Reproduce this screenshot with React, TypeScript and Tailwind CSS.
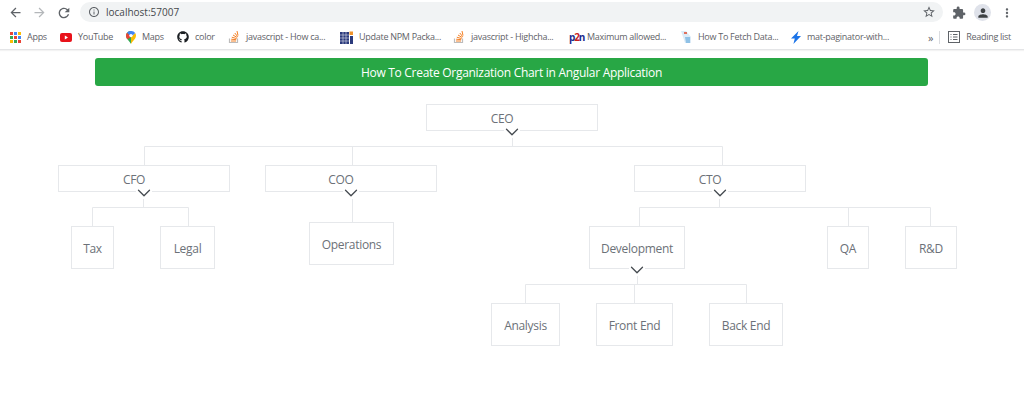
import { ChevronDown } from "lucide-react";
import { FaGithub } from "react-icons/fa";
import {
  MdArrowBack,
  MdArrowForward,
  MdExtension,
  MdInfoOutline,
  MdMoreVert,
  MdPerson,
  MdRefresh,
  MdStarBorder,
} from "react-icons/md";

function AppsIcon() {
  const colors = ["#ea4335", "#4285f4", "#fbbc04", "#34a853", "#ea4335", "#4285f4", "#fbbc04", "#34a853", "#ea4335"];
  return (
    <span className="grid grid-cols-3 gap-[1px] w-[11px] h-[11px] shrink-0">
      {colors.map((c, i) => (
        <svg key={i} viewBox="0 0 3 3" className="w-[3px] h-[3px]">
          <rect width="3" height="3" fill={c} />
        </svg>
      ))}
    </span>
  );
}

function YouTubeIcon() {
  return (
    <svg viewBox="0 0 12 9" className="w-3 h-[9px] shrink-0">
      <rect width="12" height="9" rx="2" fill="#e8121a" />
      <path d="M4.8 2.6 8 4.5 4.8 6.4z" fill="#fff" />
    </svg>
  );
}

function MapsIcon() {
  return (
    <svg viewBox="0 0 10 13" className="w-[10px] h-[13px] shrink-0">
      <path d="M5 13C3.8 10.5 0 8 0 4.6A4.8 4.8 0 0 1 5 0z" fill="#34a853" />
      <path d="M5 13c1.2-2.5 5-5 5-8.4a4.8 4.8 0 0 0-.8-2.6L5 6z" fill="#fbbc04" />
      <path d="M1 1.7A5 5 0 0 1 5 0a5 5 0 0 1 4.2 2L5 6z" fill="#4285f4" />
      <path d="M0 4.6c0-1.2.4-2.2 1-2.9L5 6 1.2 8.2C.5 7.2 0 6 0 4.6z" fill="#ea4335" />
      <circle cx="5" cy="4.6" r="1.7" fill="#fff" />
    </svg>
  );
}

function StackIcon() {
  return (
    <svg viewBox="0 0 12 14" className="w-3 h-[14px] shrink-0" fill="none">
      <path d="M1.5 8.500v4h8v-4" stroke="#bcbbbb" strokeWidth="1.2" />
      <path d="M3 11h5M3.200 9.200l5 .5M3.800 7.200l4.800 1.400M5 5l4.200 2.500M6.800 3l3 3.800M9 1l1 4.500" stroke="#f48024" strokeWidth="1" />
    </svg>
  );
}

function GridIcon() {
  return (
    <svg viewBox="0 0 13 13" className="w-[13px] h-[13px] shrink-0">
      <path d="M0 1h9v12H0z" fill="#2b3a7c" />
      <path d="M3 1v12M6 1v12M0 4h9M0 7h9M0 10h9" stroke="#fff" strokeWidth=".5" />
      <path d="M10 5h3v8h-3z" fill="#2b3a7c" />
      <rect x="9.500" y="0.500" width="3.500" height="3.500" fill="#f0932b" />
    </svg>
  );
}

function FetchIcon() {
  return (
    <svg viewBox="0 0 12 14" className="w-3 h-[14px] shrink-0">
      <path d="M1 1h5l5 6v6H5z" fill="#dcebf7" />
      <path d="M5 7h5v6H6z" fill="#8fc1e6" />
      <rect x="4" y="2" width="3" height="2" fill="#e0705c" />
    </svg>
  );
}

function BoltIcon() {
  return (
    <svg viewBox="0 0 10 13" className="w-[10px] h-[13px] shrink-0">
      <path d="M7.500 0 0 7.600h3.800L2.400 13 10 5H6z" fill="#1a73e8" />
    </svg>
  );
}

function ReadingIcon() {
  return (
    <svg viewBox="0 0 12 12" className="w-3 h-3 shrink-0" fill="none" stroke="#5f6368">
      <rect x=".5" y=".5" width="11" height="11" />
      <path d="M2.500 3.500h1M5 3.500h4.500M2.500 6h1M5 6h4.500M2.500 8.500h1M5 8.500h4.500" />
    </svg>
  );
}

const bookmarks = [
  { icon: <AppsIcon />, label: "Apps", box: "w-[50px]" },
  { icon: <YouTubeIcon />, label: "YouTube", box: "w-[66px]" },
  { icon: <MapsIcon />, label: "Maps", box: "w-[51px]" },
  { icon: <FaGithub className="w-3 h-3 shrink-0 text-[#1b1f23]" />, label: "color", box: "w-[51px]" },
  { icon: <StackIcon />, label: "javascript - How ca...", box: "w-[112px]" },
  { icon: <GridIcon />, label: "Update NPM Packa...", box: "w-[113px]" },
  { icon: <StackIcon />, label: "javascript - Highcha...", box: "w-[116px]" },
  {
    icon: (
      <span className="w-3 shrink-0 text-[10px] leading-none font-bold tracking-[-1.2px] text-[#1c2a8c]">
        p<span className="text-[#c81e1e]">2</span>n
      </span>
    ),
    label: "Maximum allowed...",
    box: "w-[111px]",
  },
  { icon: <FetchIcon />, label: "How To Fetch Data...", box: "w-[111px]" },
  { icon: <BoltIcon />, label: "mat-paginator-with...", box: "w-[130px]" },
];

const nodes = [
  { label: "CEO", box: "left-[426px] top-[104px] w-[172px] h-[27px] pr-5", chevron: true },
  { label: "CFO", box: "left-[58px] top-[165px] w-[172px] h-[27px] pr-5", chevron: true },
  { label: "COO", box: "left-[265px] top-[165px] w-[172px] h-[27px] pr-5", chevron: true },
  { label: "CTO", box: "left-[634px] top-[165px] w-[172px] h-[27px] pr-5", chevron: true },
  { label: "Tax", box: "left-[71px] top-[226px] w-[43px] h-[43px]" },
  { label: "Legal", box: "left-[160px] top-[226px] w-[55px] h-[43px]" },
  { label: "Operations", box: "left-[309px] top-[222px] w-[85px] h-[43px]" },
  { label: "Development", box: "left-[589px] top-[226px] w-[96px] h-[43px]", chevron: true },
  { label: "QA", box: "left-[827px] top-[226px] w-[42px] h-[43px]" },
  { label: "R&D", box: "left-[905px] top-[226px] w-[52px] h-[43px]" },
  { label: "Analysis", box: "left-[491px] top-[303px] w-[69px] h-[43px]" },
  { label: "Front End", box: "left-[596px] top-[303px] w-[77px] h-[43px]" },
  { label: "Back End", box: "left-[709px] top-[303px] w-[74px] h-[43px]" },
];

const connectors = [
  "M512.500 131V146.500M144.500 146.500H722.500M144.500 146.500V165M352.500 146.500V165M722.500 146.500V165",
  "M143.500 198V207.500M92.500 207.500H188.500M92.500 207.500V226M188.500 207.500V226",
  "M352.500 192V222",
  "M719.500 198V207.500M639.500 207.500H930.500M639.500 207.500V226M848.500 207.500V226M930.500 207.500V226",
  "M637.500 275V284.500M525.500 284.500H746.500M525.500 284.500V303M634.500 284.500V303M746.500 284.500V303",
];

export default function App() {
  return (
    <div className="w-[1024px] h-[402px] overflow-hidden bg-white font-['Open_Sans','Noto_Sans',sans-serif]">
      <div className="h-[50px] border-b border-[#e4e5e7] shadow-[0_1px_1px_#f3f3f3]">
        {/* address row */}
        <div className="h-[25px] flex items-center pl-[8px] pr-[8px]">
          <MdArrowBack className="w-[15px] h-[15px] text-[#5f6368]" />
          <MdArrowForward className="w-[15px] h-[15px] ml-[9px] text-[#b4b7ba]" />
          <MdRefresh className="w-[16px] h-[16px] ml-[9px] text-[#5f6368]" />
          <div className="ml-[8px] w-[863px] h-[20px] mb-[1px] rounded-full bg-[#f1f3f4] flex items-center pl-[8px] pr-[7px]">
            <MdInfoOutline className="w-[12px] h-[12px] text-[#5f6368]" />
            <span className="ml-[6px] text-[10px] text-[#45484c]">localhost:57007</span>
            <MdStarBorder className="ml-auto w-[14px] h-[14px] text-[#5f6368]" />
          </div>
          <MdExtension className="ml-[9px] w-[14px] h-[14px] text-[#5f6368]" />
          <span className="ml-[8px] w-[17px] h-[17px] rounded-full bg-[#dfe2ea] flex items-center justify-center">
            <MdPerson className="w-[14px] h-[14px] text-[#3c4043]" />
          </span>
          <MdMoreVert className="ml-[9px] w-[14px] h-[14px] text-[#5f6368]" />
        </div>

        {/* bookmarks */}
        <div className="h-[24px] flex items-center pl-[10px] text-[9px] tracking-[-0.28px] text-[#5f6368]">
          {bookmarks.map((b) => (
            <div key={b.label + b.box} className={`flex items-center gap-[6px] ${b.box}`}>
              {b.icon}
              <span className="whitespace-nowrap">{b.label}</span>
            </div>
          ))}
          <span className="ml-[7px] text-[11px] leading-none text-[#5f6368]">»</span>
          <span className="ml-[6px] w-px h-[13px] bg-[#dadce0]" />
          <span className="ml-[8px]">
            <ReadingIcon />
          </span>
          <span className="ml-[6px] whitespace-nowrap">Reading list</span>
        </div>
      </div>

      {/* banner */}
      <div className="mt-[8px] mx-[95px] w-[833px] h-[28px] pt-px rounded-[3px] bg-[#28a745] flex items-center justify-center text-[12px] tracking-[-0.29px] text-white">
        How To Create Organization Chart in Angular Application
      </div>

      {/* org chart, every offset below is relative to the page so the canvas starts at 0,0 */}
      <div className="relative w-[1024px] h-[316px] -mt-[86px] pointer-events-none">
        <svg viewBox="0 0 1024 402" className="absolute inset-0 w-[1024px] h-[402px]" fill="none" stroke="#e6e8eb">
          {connectors.map((d) => (
            <path key={d} d={d} />
          ))}
        </svg>
        {nodes.map((n) => (
          <div
            key={n.label}
            className={`absolute flex items-center justify-center pt-[2px] bg-white border border-[#e6e8eb] text-[12px] tracking-[-0.3px] text-[#6c7178] ${n.box}`}
          >
            {n.label}
            {n.chevron && (
              <span className="absolute left-1/2 -translate-x-1/2 -bottom-[8px] w-4 h-[12px] bg-white flex items-center justify-center">
                <ChevronDown size={22} strokeWidth={1.4} className="shrink-0 text-[#454a50]" />
              </span>
            )}
          </div>
        ))}
      </div>
    </div>
  );
}
